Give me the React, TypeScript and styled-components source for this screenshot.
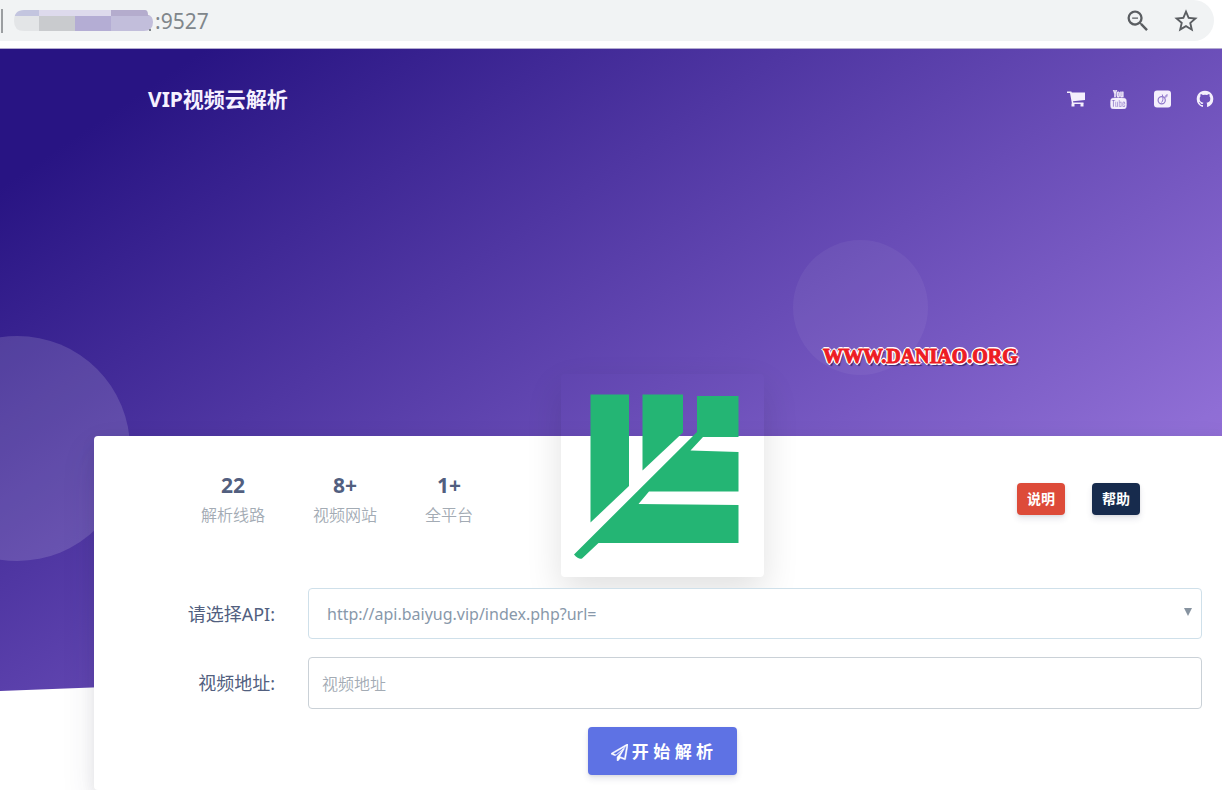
import React from "react";
import styled, { createGlobalStyle } from "styled-components";
import { TfiYoutube } from "react-icons/tfi";
import { MdStarBorder, MdZoomOut } from "react-icons/md";

const GlobalStyle = createGlobalStyle`
  *, *::before, *::after { box-sizing: border-box; }
  body {
    margin: 0;
    background: #fff;
    color: #525f7f;
    font-family: "Noto Sans", "Noto Sans CJK SC", sans-serif;
    font-size: 16px;
    line-height: 24px;
  }
  button, input, select { font: inherit; }
`;

const Window = styled.div`
  min-height: 100vh;
  display: flex;
  flex-direction: column;
  overflow: hidden;
`;

const BrowserBar = styled.div`
  height: 49px;
  padding: 0 8px 8px 0;
  border-bottom: 1px solid #b3abd0;
`;

const AddressBar = styled.div`
  height: 41px;
  padding-right: 14px;
  display: flex;
  align-items: center;
  justify-content: space-between;
  background: #f1f3f4;
  border-radius: 0 21px 21px 0;
`;

const Address = styled.div`
  display: flex;
  align-items: center;
  font-size: 21px;
  color: #80868b;
`;

const Divider = styled.span`
  width: 2px;
  height: 24px;
  margin: 0 11px 0 1px;
  background: #9b9ea1;
`;

const BarActions = styled.div`
  display: flex;
  gap: 20px;
`;

const BarButton = styled.button`
  display: flex;
  padding: 0;
  border: 0;
  background: none;
  color: #5a5d61;
  font-size: 28px;
`;

const Page = styled.main`
  position: relative;
  flex: 1;
  display: flex;
  flex-direction: column;
`;

const HeroShape = styled.div`
  position: absolute;
  inset: 0 -102px auto 0;
  height: 642px;
  overflow: hidden;
  background: linear-gradient(146deg, #281483 9%, #8f6ed5 77%, #a575d7 94%);
  clip-path: polygon(0 0, 100% 0, 100% 592px, 0 100%);
`;

const Bubble = styled.span<{ $size: number; $x: number; $y: number; $alpha: number }>`
  position: absolute;
  left: ${(p) => p.$x}px;
  top: ${(p) => p.$y}px;
  width: ${(p) => p.$size}px;
  height: ${(p) => p.$size}px;
  border-radius: 50%;
  background: rgba(255, 255, 255, ${(p) => p.$alpha});
`;

const Header = styled.header`
  position: relative;
  display: flex;
  align-items: center;
  justify-content: space-between;
  padding: 38px 8px 0 148px;
`;

const Brand = styled.a`
  color: #f6f1ff;
  font-size: 21px;
  font-weight: 700;
  text-decoration: none;
`;

const SocialLinks = styled.nav`
  display: flex;
  align-items: center;
  gap: 24px;
`;

const SocialLink = styled.a`
  display: flex;
  justify-content: center;
  width: 19px;
  color: #f4effc;
  font-size: 18px;
`;

const Watermark = styled.div`
  position: absolute;
  left: 823px;
  top: 295px;
  color: #ed1c24;
  font-family: "Liberation Serif", serif;
  font-size: 20px;
  font-weight: 700;
  -webkit-text-stroke: 1px #ed1c24;
  text-shadow: 2px 0 #fff, -2px 0 #fff, 0 2px #fff, 0 -2px #fff, 1px 1px #fff, -1px -1px #fff,
    1px -1px #fff, -1px 1px #fff, 2px 3px 1px #3a2a70;
`;

const Card = styled.section`
  position: relative;
  flex: 1;
  margin: 325px -8px 0 94px;
  padding: 34px 28px 15px 0;
  background: #fff;
  border-radius: 4px;
  box-shadow: 0 15px 35px rgba(50, 50, 93, 0.1), 0 5px 15px rgba(0, 0, 0, 0.07);
`;

const LogoFrame = styled.div`
  position: absolute;
  left: 50%;
  top: -62px;
  width: 203px;
  height: 203px;
  margin-left: -101px;
  border-radius: 4px;
  box-shadow: 0 15px 36px rgba(0, 0, 0, 0.12);
`;

const Summary = styled.div`
  display: flex;
  justify-content: space-between;
  align-items: flex-start;
  padding: 0 62px 0 107px;
`;

const Stats = styled.div`
  display: flex;
  gap: 48px;
`;

const Stat = styled.div`
  display: flex;
  flex-direction: column;
  align-items: center;
  line-height: 30px;
`;

const StatValue = styled.strong`
  font-size: 21px;
`;

const StatLabel = styled.span`
  color: #a3abb4;
  font-weight: 350;
`;

const Actions = styled.div`
  display: flex;
  gap: 27px;
  padding-top: 13px;
`;

const SmallButton = styled.button<{ $color: string }>`
  width: 48px;
  height: 32px;
  padding: 0;
  border: 0;
  border-radius: 4px;
  background: ${(p) => p.$color};
  color: #fff;
  font-size: 14px;
  font-weight: 700;
  box-shadow: 0 4px 6px rgba(50, 50, 93, 0.11), 0 1px 3px rgba(0, 0, 0, 0.08);
`;

const Form = styled.form`
  display: grid;
  grid-template-columns: 181px 1fr;
  align-items: center;
  gap: 18px 33px;
  padding-top: 58px;
`;

const Label = styled.label`
  text-align: right;
  font-size: 18px;
`;

const SelectBox = styled.div`
  position: relative;
  display: flex;
`;

const Select = styled.select`
  appearance: none;
  width: 100%;
  height: 51px;
  padding: 0 18px;
  border: 1px solid #cfe0ea;
  border-radius: 4px;
  background: #fff;
  color: #8898aa;
`;

const Arrow = styled.svg`
  position: absolute;
  right: 10px;
  top: 20px;
  pointer-events: none;
`;

const Input = styled.input`
  width: 100%;
  height: 52px;
  padding: 2px 13px 0;
  border: 1px solid #cad1d7;
  border-radius: 4px;
  background: #fff;
  &::placeholder { color: #a3abb4; font-weight: 350; }
`;

const Submit = styled.button`
  grid-column: 1 / -1;
  justify-self: center;
  display: flex;
  align-items: center;
  justify-content: center;
  gap: 4px;
  width: 149px;
  height: 48px;
  margin-left: 28px;
  padding: 2px 0 0;
  border: 0;
  border-radius: 4px;
  background: #5e72e4;
  color: #fff;
  font-size: 17px;
  font-weight: 700;
  box-shadow: 0 4px 6px rgba(50, 50, 93, 0.11), 0 1px 3px rgba(0, 0, 0, 0.08);
`;

const MaskedHost = () => (
  <svg width="141" height="22" viewBox="0 0 141 22" aria-hidden="true">
    <clipPath id="host">
      <path d="M10 0H131Q134 0 134 5Q139 6 139 12Q139 21 130 21H10Q0 21 0 11Q0 0 10 0Z" />
    </clipPath>
    <g clipPath="url(#host)">
      <path fill="#c3c5df" d="M0 0h25v6H0z" />
      <path fill="#dddaec" d="M25 0h72v6H25z" />
      <path fill="#b4accd" d="M97 0h44v6H97z" />
      <path fill="#e3e5e7" d="M0 6h25v16H0z" />
      <path fill="#c9cbce" d="M25 6h36v16H25z" />
      <path fill="#b4add4" d="M61 6h36v16H61z" />
      <path fill="#c2bedb" d="M97 6h44v16H97z" />
    </g>
    <path fill="#80868b" d="M135 19h2v2h-2z" />
  </svg>
);

const CartIcon = () => (
  <svg width="18" height="18" viewBox="0 0 18 18" fill="currentColor" aria-hidden="true">
    <path d="M0 1.500h4.300l.5 1H18v7.600L6 11.300l.3 1.200h10.200v1.500H5L3 3H0z" />
    <path d="M4.500 13.500h3v3h-3zM13.500 13.500h3v3h-3z" />
  </svg>
);

const ViadeoIcon = () => (
  <svg width="18" height="18" viewBox="0 0 18 18" aria-hidden="true">
    <rect x="1" y="0.500" width="17" height="17" rx="3" fill="currentColor" />
    <circle cx="8.700" cy="10.200" r="3.600" fill="none" stroke="#8f78cb" strokeWidth="1.200" />
    <path d="M8.500 12.500Q11 10 9.300 4.500M11.500 7.500Q12.500 5.800 14 4.500Q14.500 6.500 12.500 7.800" fill="none" stroke="#8f78cb" strokeWidth="1" />
  </svg>
);

const GithubIcon = () => (
  <svg width="18" height="18" viewBox="64 64 1664 1664" fill="currentColor" aria-hidden="true">
    <path d="M896 128q209 0 385.500 103t279.500 279.500 103 385.500q0 251-146.500 451.500t-378.500 277.500q-27 5-40-7t-13-30q0-3 .5-76.500t.5-134.500q0-97-52-142 57-6 102.500-18t94-39 81-66.500 53-105 20.500-150.500q0-119-79-206 37-91-8-204-28-9-81 11t-92 44l-38 24q-93-26-192-26t-192 26q-16-11-42.500-27t-83.500-38.500-85-13.500q-45 113-8 204-79 87-79 206 0 85 20.500 150t52.500 105 80.500 67 94 39 102.500 18q-39 36-49 103-21 10-45 15t-57 5-65.500-21.500-55.500-62.500q-19-32-48.500-52t-49.500-24l-20-3q-21 0-29 4.500t-5 11.500 9 14 13 12l7 5q22 10 43.500 38t31.500 51l10 23q13 38 44 61.500t67 30 69.500 7 55.500-3.500l23-4q0 38 .5 88.500t.5 54.500q0 18-13 30t-40 7q-232-77-378.500-277.500t-146.500-451.500q0-209 103-385.500t279.500-279.500 385.500-103z" />
  </svg>
);

const PlaneIcon = () => (
  <svg width="17" height="17" viewBox="0 0 1792 1792" fill="currentColor" stroke="currentColor" strokeWidth="50" aria-hidden="true">
    <path d="M1764 11q33 24 27 64l-256 1536q-5 29-32 45-14 8-31 8-11 0-24-5l-453-185-242 295q-18 23-49 23-13 0-22-4-19-7-30.500-23.500t-11.500-36.500v-349l864-1059-1069 925-395-162q-37-14-40-55-2-40 32-59l1664-960q15-9 32-9 20 0 36 11zm-342 1499l221-1323-1434 827 336 137 863-639-478 797z" />
  </svg>
);

const LeafLogo = () => (
  <svg width="203" height="203" viewBox="0 0 203 203" fill="#24b574" role="img" aria-label="logo">
    <path d="M29.500 20.500H68V112L29.500 148.500z" />
    <path d="M81.500 20.500H122V58.500L81.500 96.500z" />
    <path d="M136 22H177.500V63H142L129.500 76.500L177.500 78V117.500H88L77.500 130L177.500 131V169H37.500L21 184.500Q18 186 13 180.500L136 58z" />
  </svg>
);

const stats = [
  { value: "22", label: "解析线路" },
  { value: "8+", label: "视频网站" },
  { value: "1+", label: "全平台" },
];

const socials = [
  { name: "商店", icon: <CartIcon /> },
  { name: "YouTube", icon: <TfiYoutube size={19} strokeWidth={0.5} /> },
  { name: "Viadeo", icon: <ViadeoIcon /> },
  { name: "GitHub", icon: <GithubIcon /> },
];

export default function App() {
  return (
    <Window>
      <GlobalStyle />
      <BrowserBar>
        <AddressBar>
          <Address>
            <Divider />
            <MaskedHost />
            <span>:9527</span>
          </Address>
          <BarActions>
            <BarButton aria-label="缩小"><MdZoomOut /></BarButton>
            <BarButton aria-label="收藏"><MdStarBorder /></BarButton>
          </BarActions>
        </AddressBar>
      </BrowserBar>
      <Page>
        <HeroShape>
          <Bubble $size={225} $x={-95} $y={287} $alpha={0.14} />
          <Bubble $size={135} $x={793} $y={191} $alpha={0.05} />
        </HeroShape>
        <Header>
          <Brand href="#">VIP视频云解析</Brand>
          <SocialLinks>
            {socials.map((s) => (
              <SocialLink key={s.name} href="#" aria-label={s.name}>{s.icon}</SocialLink>
            ))}
          </SocialLinks>
        </Header>
        <Card>
          <LogoFrame><LeafLogo /></LogoFrame>
          <Summary>
            <Stats>
              {stats.map((s) => (
                <Stat key={s.label}>
                  <StatValue>{s.value}</StatValue>
                  <StatLabel>{s.label}</StatLabel>
                </Stat>
              ))}
            </Stats>
            <Actions>
              <SmallButton $color="#dd4b39">说明</SmallButton>
              <SmallButton $color="#172b4d">帮助</SmallButton>
            </Actions>
          </Summary>
          <Form onSubmit={(e) => e.preventDefault()}>
            <Label htmlFor="api">请选择API:</Label>
            <SelectBox>
              <Select id="api">
                <option>http://api.baiyug.vip/index.php?url=</option>
              </Select>
              <Arrow width="8" height="8" viewBox="0 0 8 8" aria-hidden="true">
                <path d="M0 0h8L4 8z" fill="#8793a0" />
              </Arrow>
            </SelectBox>
            <Label htmlFor="video">视频地址:</Label>
            <Input id="video" type="text" placeholder="视频地址" />
            <Submit type="submit"><PlaneIcon />开 始 解 析</Submit>
          </Form>
        </Card>
        <Watermark>WWW.DANIAO.ORG</Watermark>
      </Page>
    </Window>
  );
}
